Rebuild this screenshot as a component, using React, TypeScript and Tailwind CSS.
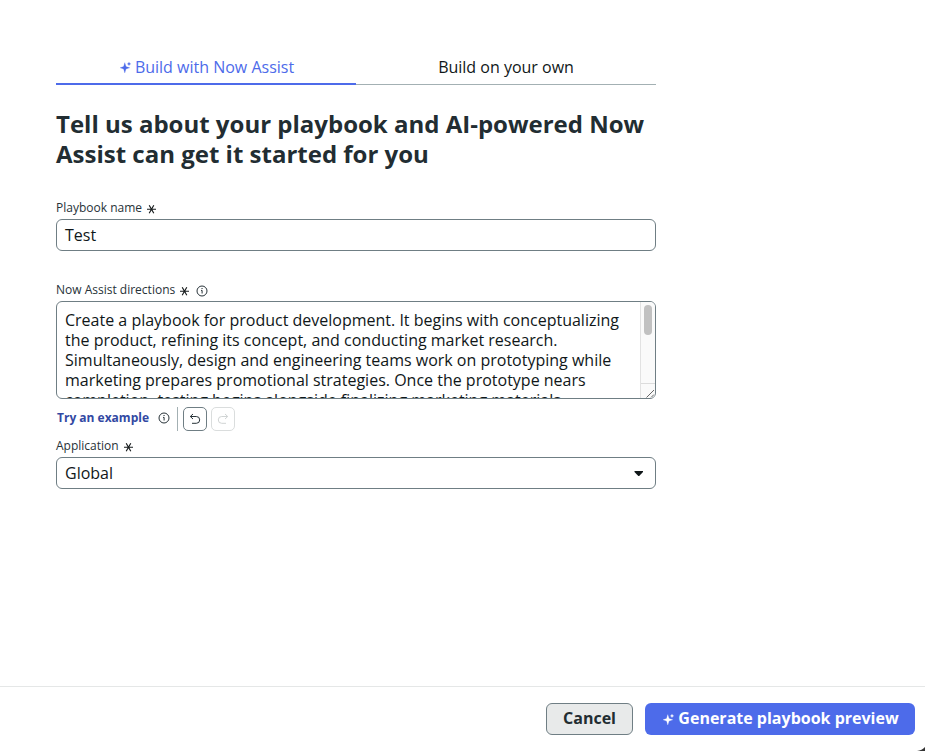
import React from "react";

function Sparkle({ className }: { className: string }) {
  return (
    <svg className={className} viewBox="0 0 12 12" fill="currentColor">
      <path d="M4.8 1.6 L6 5.6 L9.8 6.8 L6 8 L4.8 12 L3.6 8 L0 6.8 L3.6 5.6 Z" stroke="currentColor" strokeWidth="0.2" />
      <path d="M9 0.8 L9.7 2.3 L11.2 2.9 L9.7 3.5 L9 5 L8.3 3.5 L6.9 2.9 L8.3 2.3 Z" />
    </svg>
  );
}

function Asterisk() {
  return (
    <svg className="mt-0.5 ml-[5px] h-[10px] w-[9px]" viewBox="0 0 9 10" stroke="#161b1c" strokeWidth="1.15">
      <path d="M0 5.2H9M2.2 1.2L6.8 9.2M6.8 1.2L2.2 9.2" />
    </svg>
  );
}

function Info({ className }: { className: string }) {
  return (
    <svg className={className} viewBox="0 0 12 12" fill="none" stroke="#273238">
      <circle cx="6" cy="6" r="5" />
      <path d="M5 5.4H6.1V8.5M5.5 3.5H6.6" strokeWidth="1" />
    </svg>
  );
}

function Label({ text, info }: { text: string; info?: boolean }) {
  return (
    <div className="flex h-4 items-center text-xs leading-4 text-[#273238]">
      <span>{text}</span>
      <Asterisk />
      {info && <Info className="mt-px ml-[7px] h-3 w-3" />}
    </div>
  );
}

const directions = [
  "Create a playbook for product development. It begins with conceptualizing",
  "the product, refining its concept, and conducting market research.",
  "Simultaneously, design and engineering teams work on prototyping while",
  "marketing prepares promotional strategies. Once the prototype nears",
  "completion, testing begins alongside finalizing marketing materials.",
];

export default function App() {
  return (
    <div className="flex h-[751px] w-[925px] flex-col overflow-hidden bg-white font-['Open_Sans',sans-serif] text-base text-[#101719]">
      <main className="flex h-[686px] w-[656px] flex-col pt-[51px] pl-14">
        <div className="flex h-[34px] shrink-0">
          <div className="flex h-[34px] w-[300px] items-center justify-center border-b-2 border-[#4d6bea] pl-[2px] text-[#4d6bea]">
            <Sparkle className="mr-[3px] h-3 w-3" />
            <span>Build with Now Assist</span>
          </div>
          <div className="flex h-[34px] w-[300px] items-center justify-center border-b border-[#a3b0b3] pb-px">Build on your own</div>
        </div>
        <h1 className="mt-6 text-2xl leading-[30px] font-bold whitespace-nowrap text-[#222d32]">
          Tell us about your playbook and AI-powered Now
          <br />
          Assist can get it started for you
        </h1>
        <div className="mt-[31px]">
          <Label text="Playbook name" />
        </div>
        <div className="mt-[3px] flex h-8 items-center rounded-md border border-[#6f7e84] px-2">Test</div>
        <div className="mt-[31px]">
          <Label text="Now Assist directions" info />
        </div>
        <div className="mt-[3px] flex h-[98px] shrink-0 overflow-hidden rounded-md border border-[#6f7e84]">
          <div className="h-24 w-[583px] overflow-hidden pt-2 pl-2 leading-5 whitespace-nowrap">
            {directions.map((line) => (
              <div key={line}>{line}</div>
            ))}
          </div>
          <div className="flex w-[15px] flex-col items-center border-l border-[#e2e2e2] bg-[#fafafa]">
            <div className="mt-[3px] h-[30px] w-2 rounded-full bg-[#c1c1c1]" />
            <div className="mt-auto flex h-[15px] w-full items-end justify-end border-t border-[#dcdcdc]">
              <svg className="h-[9px] w-[9px]" viewBox="0 0 9 9" stroke="#555" strokeWidth="0.9">
                <path d="M0.5 8.5L8 1M5 8.5L8 5.5" />
              </svg>
            </div>
          </div>
        </div>
        <div className="mt-[7px] flex h-[25px] items-center">
          <span className="-mt-0.5 ml-px text-xs leading-4 font-bold text-[#3249a3]">Try an example</span>
          <Info className="-mt-px ml-[9px] h-3 w-3" />
          <div className="ml-[7px] h-6 w-px bg-[#a3b0b3]" />
          <div className="ml-[5px] flex h-6 w-6 items-center justify-center rounded-[5px] border border-[#6f7e84]">
            <svg className="h-3 w-3" viewBox="0 0 12 12" fill="none" stroke="#273238">
              <path d="M4 1L1.3 3.5L4 6M1.3 3.5H7.3A3.3 3.3 0 0 1 7.3 10.3H3" />
            </svg>
          </div>
          <div className="ml-1 flex h-6 w-6 items-center justify-center rounded-[5px] border border-[#dadddd]">
            <svg className="h-3 w-3" viewBox="0 0 12 12" fill="none" stroke="#d0d4d4">
              <path d="M8 1L10.7 3.5L8 6M10.7 3.5H4.7A3.3 3.3 0 0 0 4.7 10.3H9" />
            </svg>
          </div>
        </div>
        <div className="mt-[7px]">
          <Label text="Application" />
        </div>
        <div className="mt-[3px] flex h-8 items-center justify-between rounded-md border border-[#6f7e84] pr-[12px] pl-2">
          <span>Global</span>
          <svg className="h-[5px] w-[9px]" viewBox="0 0 9 5">
            <path d="M0.5 0H9V1L5.2 5H4.3L0.5 1Z" fill="#101719" />
          </svg>
        </div>
      </main>
      <footer className="relative flex h-[65px] items-start justify-end gap-3 border-t border-[#e5e7e7] pt-4 pr-[10px] font-bold">
        <button className="h-8 w-[87px] rounded-md border border-[#6f7e84] bg-[#e8eaea] pb-0.5 text-[#222d32]">Cancel</button>
        <button className="flex h-8 w-[270px] items-center justify-center rounded-md bg-[#4d6bea] pl-[2px] text-white">
          <Sparkle className="mr-[3px] h-3 w-3" />
          <span className="pb-0.5">Generate playbook preview</span>
        </button>
        <svg className="absolute right-0 bottom-0 h-1 w-2" viewBox="0 0 8 4">
          <path d="M0 4Q5 3.5 8 0V4Z" fill="#333" />
        </svg>
      </footer>
    </div>
  );
}
